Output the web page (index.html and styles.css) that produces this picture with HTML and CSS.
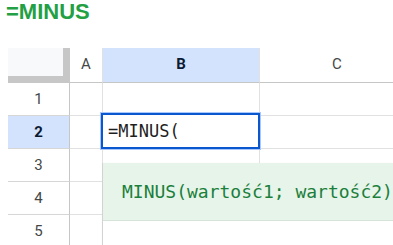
FILE: index.html
```html
<!DOCTYPE html>
<html lang="pl">
<head>
<meta charset="utf-8">
<link rel="stylesheet" href="styles.css">
</head>
<body>
<h1 class="title">=MINUS</h1>
<div class="sheet">
  <div class="corner"></div>
  <div class="col-head">A</div>
  <div class="col-head selected">B</div>
  <div class="col-head last">C</div>

  <div class="row-head">1</div>
  <div class="cell"></div>
  <div class="cell"></div>
  <div class="cell last"></div>

  <div class="row-head selected">2</div>
  <div class="cell"></div>
  <div class="cell active"><div class="editor">=MINUS(</div></div>
  <div class="cell last"></div>

  <div class="row-head">3</div>
  <div class="cell"></div>
  <div class="cell"></div>
  <div class="cell last"></div>

  <div class="row-head">4</div>
  <div class="cell"></div>
  <div class="cell"></div>
  <div class="cell last"></div>

  <div class="row-head">5</div>
  <div class="cell"></div>
  <div class="cell"></div>
  <div class="cell last"></div>

  <div class="help">
    <div class="help-head">MINUS(wartość1; wartość2)</div>
  </div>
</div>
</body>
</html>
```

FILE: styles.css
```css
* { box-sizing: border-box; }

html, body {
  margin: 0;
  padding: 0;
  background: #ffffff;
  overflow: hidden;
}

body {
  width: 393px;
  height: 245px;
  font-family: Roboto, "Liberation Sans", Arial, sans-serif;
}

.title {
  margin: 0;
  height: 48px;
  padding: 0 0 0 6px;
  font-family: "Liberation Sans", Arial, sans-serif;
  font-weight: 700;
  font-size: 22px;
  line-height: 24px;
  color: #22a043;
}

.sheet {
  position: relative;
  margin-left: 8px;
  width: 385px;
  height: 197px;
  overflow: hidden;
  display: grid;
  grid-template-columns: 62px 33px 157px 154px;
  grid-template-rows: 35px 33px 33px 33px 33px 33px;
}

.corner {
  background: #f8f9fa;
  border-right: 7px solid #c7c7c7;
  border-bottom: 7px solid #c7c7c7;
}

.col-head {
  display: flex;
  align-items: center;
  justify-content: center;
  background: #ffffff;
  border-right: 1px solid #e1e1e1;
  border-bottom: 1px solid #c4c7c5;
  font-size: 15px;
  color: #444746;
  padding-bottom: 3px;
}

.col-head.selected {
  background: #d3e3fd;
  color: #0b1a33;
  font-weight: 700;
}

.col-head.last { border-right: none; }

.row-head {
  display: flex;
  align-items: center;
  justify-content: center;
  background: #ffffff;
  border-right: 1px solid #c4c7c5;
  border-bottom: 1px solid #d6d6d6;
  font-size: 15px;
  color: #444746;
}

.row-head.selected {
  background: #d3e3fd;
  color: #0b1a33;
  font-weight: 700;
}

.cell {
  position: relative;
  border-right: 1px solid #e1e1e1;
  border-bottom: 1px solid #e1e1e1;
}

.cell.last { border-right: none; }

.cell.active .editor {
  position: absolute;
  left: -2px;
  top: -3px;
  right: -1px;
  bottom: -1px;
  border: 2px solid #0b57d0;
  box-shadow: 0 0 0 1px #a8c7fa;
  background: #ffffff;
  display: flex;
  align-items: center;
  padding-left: 5px;
  font-family: "DejaVu Sans Mono", "Liberation Mono", monospace;
  font-size: 17px;
  color: #1f1f1f;
  z-index: 2;
}

.help {
  position: absolute;
  left: 95px;
  top: 115px;
  right: 0;
  bottom: 0;
  background: #ffffff;
  box-shadow: -1px 0 1px rgba(0, 0, 0, 0.06);
  z-index: 3;
}

.help-head {
  height: 58px;
  background: #e6f4ea;
  border-bottom: 1px solid #d5e3d9;
  display: flex;
  align-items: center;
  padding-left: 19px;
  white-space: nowrap;
  font-family: "DejaVu Sans Mono", "Liberation Mono", monospace;
  font-size: 18px;
  color: #1b7f3b;
}
```
